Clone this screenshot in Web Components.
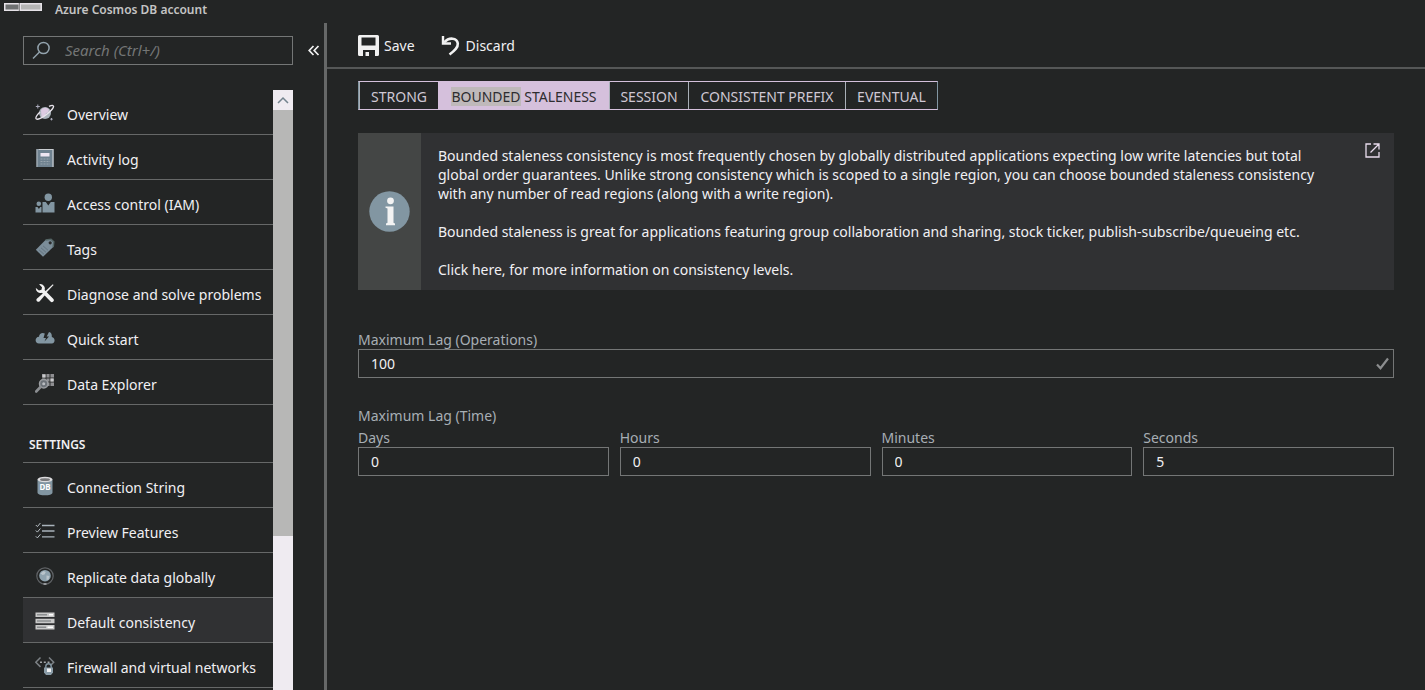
<!DOCTYPE html>
<html lang="en">
<head>
<meta charset="utf-8">
<meta name="viewport" content="width=device-width, initial-scale=1">
<title>Azure Cosmos DB account - Default consistency</title>
<style>
  :root {
    --bg: #232525;
    --panel: #303133;
    --line: #666868;
    --line-soft: #555757;
    --text: #f1f0f3;
    --muted: #a7aeb4;
    --slate: #8296a2;
    --lilac: #d5c0dc;
  }
  body {
    margin: 0;
    background: var(--bg);
    color: var(--text);
    font: 14px/19px "Noto Sans", "Open Sans", sans-serif;
  }
</style>
</head>
<body>
<cosmos-blade></cosmos-blade>

<script>
const define = (name, html, setup) => {
  const template = document.createElement('template');
  template.innerHTML = '<style>*{box-sizing:border-box}</style>' + html;
  customElements.define(name, class extends HTMLElement {
    connectedCallback() {
      if (this.shadowRoot) return;
      this.attachShadow({ mode: 'open' }).append(template.content.cloneNode(true));
      if (setup) setup(this, this.shadowRoot);
    }
  });
};

/* 20x20 menu glyphs */
const ICONS = {
  planet: `<circle cx="10" cy="10" r="6" fill="#a9b3bb"/><path d="M6 7c2-3 6-3 8-.500l-1 3-2 .500-1 3-3.500 1z" fill="#dccbe2"/><path d="M5 9C2 12 .300 14.800 1.200 15.700c1.300 1.200 6-.800 10.600-4.400s7.400-7.300 6.500-8.500c-.500-.700-2.300-.300-4.300.600" fill="none" stroke="#e8e4ec" stroke-width="1.400"/><path d="M2.800 1.500v4M.800 3.500h4M16.500 15v2.400M15.300 16.200h2.400" stroke="#aab" stroke-width="1"/>`,
  log: `<path d="M1.500 1h17v18h-17z" fill="#6f8290"/><path d="M3.500 1.500h14.500v17.500" fill="none" stroke="#c8ccd0" stroke-width="1.200"/><path d="M5.500 5h9v3.500h-9z" fill="#eee6f2"/><path d="M5.500 11h9.500M5.500 13.500h9.500M5.500 16h9.500" stroke="#98a5ae" stroke-dasharray="2 1"/><path d="M2 1v18" stroke="#b5bcc1"/>`,
  people: `<circle cx="13.300" cy="4.200" r="3.700" fill="#8296a2"/><path d="M7.500 19.500V9h3.300l2.500 3.500L15.800 9h3.700v10.500z" fill="#8296a2"/><circle cx="3.800" cy="10.800" r="2.300" fill="#8296a2"/><path d="M.500 19.500V14h2l1.400 2 1.400-2h1.200v5.500z" fill="#8296a2"/>`,
  tag: `<path d="M.800 11.800 10.500 2l5.500-.700 2.800 2.600-.600 5.200L8 18.800z" fill="#7b8d99"/><path d="M10.500 2l5.500-.700 2.800 2.600-.600 5.200" fill="none" stroke="#566" stroke-width="1.500"/><circle cx="15.200" cy="4.800" r="1.600" fill="#2a2c2c"/><path d="m4 11.800 5 4.500M6 9.800l5 4.500M8 7.800l5 4.500" stroke="#5d6d78" stroke-width=".8"/>`,
  tools: `<path d="m17.800 1.200.800.800-7.800 8.200-1.200-1.200z" fill="#eee"/><path d="m9.200 9.300 1.700 1.700-6.200 7.300c-1.800 1.700-4.300-.900-2.900-2.500z" fill="#f2f2f2"/><path d="M5.200 1a4.600 4.600 0 0 1 4.400 6.100l8.600 8.700a1.900 1.900 0 0 1-2.700 2.700L7 9.800A4.600 4.600 0 0 1 .900 4.900l3 2.600 2.600-.800.500-2.500-2.900-2.900z" fill="#f2f2f2"/>`,
  cloud: `<path d="M4 15.500C-.500 15.500-.500 9 4 8.800 4 5.500 7.500 4 9.800 5.500L8.500 10h2.500L9.500 13.500 14 8.500h-2.300L14 4c2.500.500 3 2.500 2.800 5 3.600.500 3.800 6.500 0 6.500z" fill="#8296a2"/>`,
  explorer: `<path d="M7 1h12v12H7z" fill="#8f8f92"/><path d="M11 1v12M15 1v12M7 5h12M7 9h12" stroke="#2f3131"/><path d="M7.500 1.500h3v3h-3zM15.500 5.500h3v3h-3z" fill="#c9c9cc"/><circle cx="8.700" cy="10.700" r="4.200" fill="#6c7278" stroke="#9a9da0" stroke-width="1.500"/><circle cx="8.700" cy="10.700" r="1.500" fill="#b9bcc0"/><path d="m5.500 14-4.300 4.500" stroke="#8b8e91" stroke-width="2.600" stroke-linecap="round"/>`,
  db: `<path d="M2.500 3.500v13c0 3.800 15 3.800 15 0v-13z" fill="#8296a2"/><ellipse cx="10" cy="3.500" rx="7.500" ry="2.800" fill="#dcdcde"/><ellipse cx="10" cy="3.700" rx="5" ry="1.400" fill="#77787a"/><text x="10" y="14.300" text-anchor="middle" font-size="8" font-weight="700" fill="#fff">DB</text>`,
  checklist: `<path d="M7 4.500h12.500M7 10h12.500M7 15.800h12.500" stroke="#a9b3bb" stroke-width="1.300"/><path d="m.800 4 1.600 1.600L5.400 2M.800 9.500l1.600 1.600 3-3.600M.800 15.300l1.600 1.600 3-3.600" fill="none" stroke="#b8c0c6"/>`,
  globe: `<circle cx="10" cy="10" r="8.200" fill="none" stroke="#606366" stroke-width="1.200"/><circle cx="10" cy="9.700" r="5.800" fill="#8fa3af"/><path d="m5.500 7.500 3-2.500 2.300 1-1.300 2.500-2 .500zM11.500 9.500l3 .500-1 3.500-2 .500z" fill="#b9c4cb"/><path d="M8.500 18h3" stroke="#a8abae" stroke-width="1.600"/>`,
  bars: `<path d="M.500 1.500h19v4.600H.500zM.500 7.700h19v4.600H.500zM.500 13.900h19v4.600H.500z" fill="#c9c9c9"/><path d="M2 3.800h10M2 10h14M2 16.200h9" stroke="#8c8e90" stroke-width="1.400"/><path d="M14 3.800h4M12.500 16.200h5.500" stroke="#fff" stroke-width="1.600"/>`,
  firewall: `<path d="M5.500 1.500.800 6.200l4.700 4.700M14 1.500l4.700 4.700-3 3" fill="none" stroke="#7c8185" stroke-width="1.500"/><path d="M5 6.200h9.500" stroke="#a3a7aa" stroke-width="1.600" stroke-dasharray="2 1.800"/><path d="M10.800 12v-1.500a2.700 2.700 0 0 1 5.400 0V12" fill="none" stroke="#8296a2" stroke-width="1.400"/><path d="M9 11.500h9v5l-2 2.500h-5l-2-2.500z" fill="#8a9ca7"/><path d="M12 12.500h4v3.500h-4z" fill="#f1f1f1"/>`
};

define('account-header', `
  <style>
    :host { display: flex; align-items: flex-start; height: 23px; padding-left: 4px; gap: 13px; color: #c4c4c4; }
    svg { flex: none; }
    p { margin: 0; font-size: 12px; line-height: 19px; font-weight: 600; }
  </style>
  <svg width="38" height="12" aria-hidden="true">
    <path d="M0 3h38v8H0z" fill="#e6e2e8"/><path d="M1.500 4.500h13v5h-13z" fill="#6e7071"/><path d="M17 4.500h19.500v5H17z" fill="#b5b5b5"/><path d="M15.300 3v8" stroke="#777" />
  </svg>
  <p><slot></slot></p>`);

define('search-box', `
  <style>
    :host { display: block; flex: 1; min-width: 0; }
    label { display: flex; align-items: center; height: 29px; border: 1px solid #747676; padding-left: 8px; gap: 14px; }
    input { flex: 1; min-width: 0; padding: 0; border: 0; outline: 0; background: none; color: inherit; font: inherit; font-size: 15px; }
    input::placeholder { color: #747676; font-style: italic; opacity: 1; }
    svg { flex: none; }
  </style>
  <label>
    <svg width="19" height="19" viewBox="0 0 19 19" fill="none" stroke="#93a3ad" stroke-width="1.500" aria-hidden="true"><circle cx="11.500" cy="7" r="5.600"/><path d="M7.500 11 1 17.500"/></svg>
    <input type="search" aria-label="Search" placeholder="Search (Ctrl+/)">
  </label>`);

define('nav-item', `
  <style>
    :host { display: block; }
    a { display: flex; align-items: center; gap: 12px; height: 45px; padding: 2px 0 0 12px; border-bottom: 1px solid var(--line); color: inherit; text-decoration: none; white-space: nowrap; }
    :host([selected]) a { background: var(--panel); }
    svg { flex: none; }
    a span { padding-top: 2px; }
  </style>
  <a href="#"><svg width="20" height="20" viewBox="0 0 20 20" aria-hidden="true"></svg><span><slot></slot></span></a>`,
  (host, root) => {
    root.querySelector('svg').innerHTML = ICONS[host.getAttribute('icon')];
    if (host.hasAttribute('selected')) root.querySelector('a').setAttribute('aria-current', 'page');
  });

define('nav-heading', `
  <style>
    :host { display: block; }
    h2 { margin: 0; height: 58px; padding: 30px 0 0 6px; border-bottom: 1px solid var(--line); font-size: 12px; line-height: 19px; font-weight: 600; }
  </style>
  <h2><slot></slot></h2>`);

define('scroll-rail', `
  <style>
    :host { display: flex; flex-direction: column; flex: none; width: 20px; background: #efebf1; }
    button { flex: none; width: 20px; height: 20px; padding: 0; border: 0; background: none; display: grid; place-items: center; }
    div { height: 71%; background: #b7b7b6; }
  </style>
  <button aria-label="Scroll up"><svg width="12" height="8" fill="none" stroke="#73838e" stroke-width="1.500"><path d="m1 7 5-5 5 5"/></svg></button>
  <div></div>`);

define('side-menu', `
  <style>
    :host { display: flex; flex-direction: column; flex: none; width: 327px; padding: 13px 0 0 23px; border-right: 3px solid var(--line); }
    .top { display: flex; align-items: center; padding-bottom: 25px; }
    .top button { flex: none; width: 31px; height: 29px; padding: 0 0 0 10px; border: 0; background: none; display: flex; align-items: center; justify-content: center; }
    .scroll { display: flex; flex: 1; min-height: 0; margin-right: 31px; }
    nav { flex: 1; min-width: 0; overflow: hidden; }
  </style>
  <div class="top">
    <search-box></search-box>
    <button aria-label="Collapse menu"><svg width="12" height="12" fill="none" stroke="#f1f1f1" stroke-width="1.700"><path d="M5.500 1 1.200 5.500l4.300 4.500M10.500 1 6.200 5.500l4.300 4.500"/></svg></button>
  </div>
  <div class="scroll">
    <nav aria-label="Account">
      <nav-item icon="planet">Overview</nav-item>
      <nav-item icon="log">Activity log</nav-item>
      <nav-item icon="people">Access control (IAM)</nav-item>
      <nav-item icon="tag">Tags</nav-item>
      <nav-item icon="tools">Diagnose and solve problems</nav-item>
      <nav-item icon="cloud">Quick start</nav-item>
      <nav-item icon="explorer">Data Explorer</nav-item>
      <nav-heading>SETTINGS</nav-heading>
      <nav-item icon="db">Connection String</nav-item>
      <nav-item icon="checklist">Preview Features</nav-item>
      <nav-item icon="globe">Replicate data globally</nav-item>
      <nav-item icon="bars" selected>Default consistency</nav-item>
      <nav-item icon="firewall">Firewall and virtual networks</nav-item>
    </nav>
    <scroll-rail></scroll-rail>
  </div>`);

define('command-bar', `
  <style>
    :host { display: flex; align-items: center; gap: 26px; height: 46px; padding-left: 31px; border-bottom: 2px solid var(--line-soft); }
    button { display: flex; align-items: center; gap: 5px; padding: 1px 0 0; border: 0; background: none; color: inherit; font: inherit; }
  </style>
  <button>
    <svg width="21" height="21" viewBox="0 0 21 21" aria-hidden="true"><path fill="#f1f1f1" fill-rule="evenodd" d="M1.500 0h18q1.500 0 1.500 1.500v18q0 1.500-1.500 1.500H17v-6H5v6H1.500Q0 21 0 19.500v-18Q0 0 1.500 0zM3.500 2.500v8h14v-8z"/><path fill="#f1f1f1" d="M7.500 17H11v4H7.500z"/></svg>
    Save
  </button>
  <button>
    <svg width="20" height="21" viewBox="0 0 20 21" fill="none" stroke="#f1f1f1" aria-hidden="true"><path stroke-width="2.600" d="M3 7.500C8 2 16 2.500 16.800 8.500c.400 4-3 7-8.300 11"/><path stroke-width="2.400" d="M2 1v7.500h8"/></svg>
    Discard
  </button>`);

define('consistency-tabs', `
  <style>
    :host { display: grid; grid-template-columns: 79px 171px 79px 157px 92px; width: max-content; height: 29px; border: 1px solid var(--lilac); border-left-color: var(--slate); border-right-color: var(--slate); }
    button { padding: 2px 0 0; border: 0; border-left: 1px solid #a9b0b8; background: none; color: #cfc8d4; font: inherit; white-space: nowrap; }
    button:first-child, button[aria-pressed=true] { border-left-color: transparent; }
    button[aria-pressed=true] { background: var(--lilac); color: #2d2d30; }
    mark { background: #bfb9ba; color: inherit; }
  </style>
  <button aria-pressed="false">STRONG</button>
  <button aria-pressed="true"><mark>BOUNDED</mark> STALENESS</button>
  <button aria-pressed="false">SESSION</button>
  <button aria-pressed="false">CONSISTENT PREFIX</button>
  <button aria-pressed="false">EVENTUAL</button>`);

define('info-panel', `
  <style>
    :host { display: flex; background: var(--panel); }
    .mark { flex: none; display: grid; place-items: center; width: 63px; background: #444645; }
    .body { flex: 1; padding: 13px 0 11px 17px; }
    .body ::slotted(p) { max-width: 894px; margin: 0 0 19px; }
    .body ::slotted(p:last-of-type) { margin-bottom: 0; }
    a { flex: none; width: 29px; padding-top: 10px; }
    a svg { display: block; }
  </style>
  <div class="mark">
    <svg width="41" height="41" viewBox="0 0 41 41" aria-hidden="true"><circle cx="20.500" cy="20.500" r="20.200" fill="#8296a2"/><circle cx="21.500" cy="9.800" r="3.400" fill="#f3f3f3"/><path d="M16.500 15.500h8v16.300l1.500.800v1.600h-9v-1.600l1.500-.800V17.500l-2-.800z" fill="#f3f3f3"/></svg>
  </div>
  <div class="body"><slot></slot></div>
  <a href="#" aria-label="Open documentation"><svg width="15" height="15" fill="none" stroke="#e9dcee" stroke-width="1.300"><path d="M6 1H1v13h13V9M8.500 1H14v5.500M14 1 5.500 9.500"/></svg></a>`);

define('lag-field', `
  <style>
    :host { display: block; min-width: 0; }
    label { display: block; line-height: 18px; color: var(--muted); }
    .box { display: flex; align-items: center; height: 29px; padding: 0 4px 0 12px; border: 1px solid #747676; }
    input { flex: 1; min-width: 0; padding: 0; border: 0; outline: 0; background: none; color: var(--text); font: inherit; }
    svg { display: none; flex: none; }
    :host([valid]) svg { display: block; }
  </style>
  <label for="value"><slot></slot></label>
  <div class="box"><input id="value" type="text" inputmode="numeric"><svg width="13" height="13" fill="none" stroke="#8b8d8e" stroke-width="2.200" aria-hidden="true"><path d="M1 7.500 4.500 11.200 12 1.500"/></svg></div>`,
  (host, root) => { root.querySelector('input').value = host.getAttribute('value'); });

define('consistency-form', `
  <style>
    :host { display: block; padding: 12px 31px 0; }
    info-panel { margin: 23px 0 41px; }
    fieldset { margin: 29px 0 0; padding: 0; border: 0; min-width: 0; }
    legend { padding: 0 0 4px; line-height: 18px; color: var(--muted); }
    .times { display: grid; grid-template-columns: repeat(4, 1fr); gap: 11px; }
  </style>
  <consistency-tabs></consistency-tabs>
  <info-panel>
    <p>Bounded staleness consistency is most frequently chosen by globally distributed applications expecting low write latencies but total global order guarantees. Unlike strong consistency which is scoped to a single region, you can choose bounded staleness consistency with any number of read regions (along with a write region).</p>
    <p>Bounded staleness is great for applications featuring group collaboration and sharing, stock ticker, publish-subscribe/queueing etc.</p>
    <p>Click here, for more information on consistency levels.</p>
  </info-panel>
  <lag-field value="100" valid>Maximum Lag (Operations)</lag-field>
  <fieldset>
    <legend>Maximum Lag (Time)</legend>
    <div class="times">
      <lag-field value="0">Days</lag-field>
      <lag-field value="0">Hours</lag-field>
      <lag-field value="0">Minutes</lag-field>
      <lag-field value="5">Seconds</lag-field>
    </div>
  </fieldset>`);

define('cosmos-blade', `
  <style>
    :host { display: flex; flex-direction: column; height: 100vh; overflow: hidden; }
    .columns { display: flex; flex: 1; min-height: 0; }
    main { flex: 1; min-width: 0; }
  </style>
  <account-header>Azure Cosmos DB account</account-header>
  <div class="columns">
    <side-menu></side-menu>
    <main>
      <command-bar></command-bar>
      <consistency-form></consistency-form>
    </main>
  </div>`);
</script>
</body>
</html>
